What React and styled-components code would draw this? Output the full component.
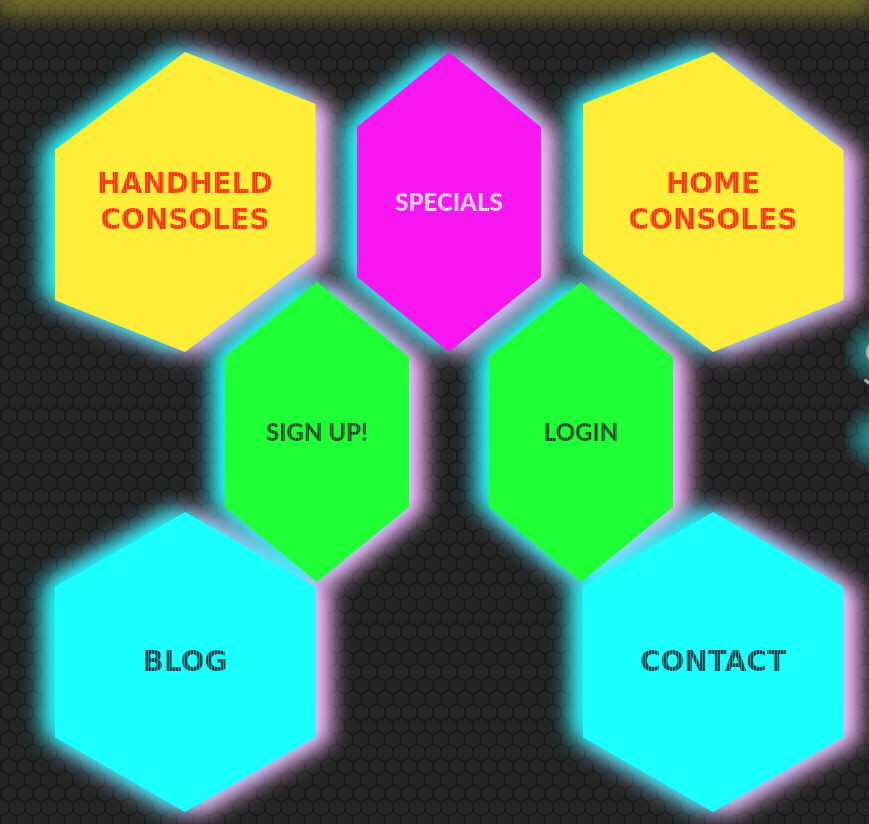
import React from "react";
import styled, { createGlobalStyle } from "styled-components";

const honeycomb = encodeURIComponent(
  `<svg xmlns="http://www.w3.org/2000/svg" width="16" height="27" viewBox="0 0 16 27"><rect width="16" height="27" fill="#242424"/><path d="M0 0V9L8 13.5L16 9V0M8 13.5V22.5L0 27M8 22.5L16 27" fill="none" stroke="#171717" stroke-width="1.8"/></svg>`
);

const GlobalStyle = createGlobalStyle`
  * { box-sizing: border-box; }
  body {
    margin: 0;
    background: #242424 url("data:image/svg+xml,${honeycomb}") 1px 6px;
    overflow: hidden;
  }
`;

const Page = styled.div`
  display: flex;
  overflow: hidden;
`;

const TopGlow = styled.header`
  height: 0;
  box-shadow: 0 0 28px 8px rgba(255, 238, 56, 0.75);
`;

const Menu = styled.nav`
  flex: 0 0 auto;
  display: grid;
  grid-template-columns: repeat(6, 132px);
  grid-auto-rows: 230px;
  padding: 52px 0 82px 53px;
  filter: drop-shadow(-12px -3px 11px #1ff) drop-shadow(15px 3px 10px #fbf);
`;

const shapes = {
  left: "polygon(50% 0, 100% 17.3%, 100% 67.3%, 50% 100%, 0 82.7%, 0 32.7%)",
  right: "polygon(50% 0, 100% 32.7%, 100% 82.7%, 50% 100%, 0 67.3%, 0 17.3%)",
  even: "polygon(50% 0, 100% 25%, 100% 75%, 50% 100%, 0 75%, 0 25%)",
};

const Hexagon = styled.a`
  grid-column: ${(p) => p.$column} / span 2;
  grid-row: ${(p) => p.$row};
  justify-self: center;
  display: flex;
  align-items: center;
  justify-content: center;
  width: ${(p) => (p.$narrow ? 184 : 261)}px;
  height: 300px;
  clip-path: ${(p) => shapes[p.$shape]};
  background: ${(p) => p.$fill};
  font-family: ${(p) => (p.$narrow ? "Lato" : '"DejaVu Sans"')}, sans-serif;
  font-weight: 900;
  font-size: ${(p) => (p.$narrow ? 24 : 28)}px;
  line-height: 36px;
  text-transform: uppercase;
  text-align: center;
  text-decoration: none;
`;

const Label = styled.span`
  max-width: 200px;
  color: transparent;
  background: repeating-linear-gradient(
    90deg,
    ${(p) => p.$ink} 0 2px,
    ${(p) => p.$stripe} 2px 3px
  );
  background-clip: text;
`;

const Intro = styled.section`
  flex: 1 1 0;
  min-width: 0;
  padding: 322px 0 0 16px;
  white-space: nowrap;
  background:
    radial-gradient(circle at 32px 352px, rgba(39, 225, 230, 0.7), transparent 36px),
    radial-gradient(circle at 32px 438px, rgba(39, 225, 230, 0.7), transparent 36px);
`;

const Heading = styled.h1`
  margin: 0;
  color: #a9a9a9;
  font: 300 64px/80px Lato, sans-serif;
`;

const red = { ink: "#ff3216", stripe: "#ff6a20" };
const pale = { ink: "#ffe4fd", stripe: "#fb9cf7" };
const forest = { ink: "#204028", stripe: "#208a30" };
const teal = { ink: "#20454a", stripe: "#209898" };

const items = [
  { text: "HandHeld Consoles", column: 1, row: 1, shape: "left", fill: "#ffee38", tone: red },
  { text: "Specials", column: 3, row: 1, shape: "even", fill: "#f816f1", tone: pale, narrow: true },
  { text: "Home Consoles", column: 5, row: 1, shape: "right", fill: "#ffee38", tone: red },
  { text: "Blog", column: 1, row: 3, shape: "even", fill: "#1affff", tone: teal },
  { text: "Contact", column: 5, row: 3, shape: "even", fill: "#1affff", tone: teal },
  { text: "Sign Up!", column: 2, row: 2, shape: "even", fill: "#1fff36", tone: forest, narrow: true },
  { text: "Login", column: 4, row: 2, shape: "even", fill: "#1fff36", tone: forest, narrow: true },
];

export default function App() {
  return (
    <>
      <GlobalStyle />
      <TopGlow />
      <Page>
        <Menu>
          {items.map((item) => (
            <Hexagon
              key={item.text}
              href="#"
              $column={item.column}
              $row={item.row}
              $shape={item.shape}
              $fill={item.fill}
              $narrow={item.narrow}
            >
              <Label $ink={item.tone.ink} $stripe={item.tone.stripe}>
                {item.text}
              </Label>
            </Hexagon>
          ))}
        </Menu>
        <Intro>
          <Heading>S</Heading>
        </Intro>
      </Page>
    </>
  );
}
